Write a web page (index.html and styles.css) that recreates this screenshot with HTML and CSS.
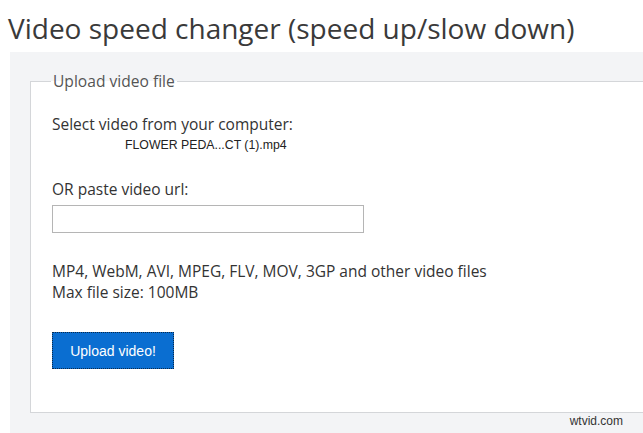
FILE: index.html
```html
<!DOCTYPE html>
<html>
<head>
<meta charset="utf-8">
<link rel="stylesheet" href="styles.css">
</head>
<body>
<h1 class="title">Video speed changer (speed up/slow down)</h1>
<div class="panel">
  <fieldset class="box">
    <legend class="legend">Upload video file</legend>
    <div class="label">Select video from your computer:</div>
    <div class="filename">FLOWER PEDA...CT (1).mp4</div>
    <div class="label url-label">OR paste video url:</div>
    <input class="url" type="text">
    <div class="info">MP4, WebM, AVI, MPEG, FLV, MOV, 3GP and other video files<br>Max file size: 100MB</div>
    <div class="btn-wrap"><button class="btn">Upload video!</button></div>
  </fieldset>
  <div class="watermark">wtvid.com</div>
</div>
</body>
</html>
```
FILE: styles.css
```css
html, body { margin: 0; padding: 0; background: #fff; overflow: hidden; }
body { font-family: "Open Sans", "Noto Sans", sans-serif; color: #333; }
.title {
  margin: 0;
  padding: 8px 0 0 8px;
  height: 46px;
  box-sizing: border-box;
  font-weight: 400;
  font-size: 28px;
  line-height: 40px;
  color: #3a3a3a;
  white-space: nowrap;
}
.panel {
  margin: 6px 0 0 10px;
  background: #f3f4f6;
  padding: 18px 0 0 20px;
  height: 381px;
  box-sizing: border-box;
  position: relative;
}
.box {
  margin: 0 -20px 0 0;
  background: #fff;
  border: 1px solid #d4d6d9;
  border-right: none;
  padding: 22px 21px 0 21px;
  height: 343px;
  box-sizing: border-box;
}
.legend {
  padding: 0 2px;
  margin-left: -1px;
  font-size: 15.6px;
  color: #555;
}
.label { font-size: 15.5px; line-height: 20px; color: #333; }
.filename {
  font-family: "Liberation Sans", Arial, sans-serif;
  font-size: 12.3px;
  line-height: 16px;
  padding-left: 73px;
  margin-top: 3px;
  color: #222;
}
.url-label { margin-top: 26px; }
.url {
  display: block;
  margin-top: 6px;
  width: 312px;
  height: 28px;
  box-sizing: border-box;
  border: 1px solid #b5b5b5;
  padding: 0 4px;
}
.info { margin-top: 28px; font-size: 15.5px; line-height: 21px; color: #333; }
.btn-wrap { margin-top: 29px; }
.btn {
  background: #0a6ed1;
  color: #fff;
  border: 1px dotted #0b2a4a;
  width: 122px;
  height: 37px;
  font-family: "Liberation Sans", Arial, sans-serif;
  font-size: 14px;
  padding: 0;
  outline: none;
}
.watermark {
  position: absolute;
  right: 20px;
  bottom: 5px;
  font-family: "Liberation Sans", Arial, sans-serif;
  font-size: 12px;
  line-height: 14px;
  color: #333;
}
```
